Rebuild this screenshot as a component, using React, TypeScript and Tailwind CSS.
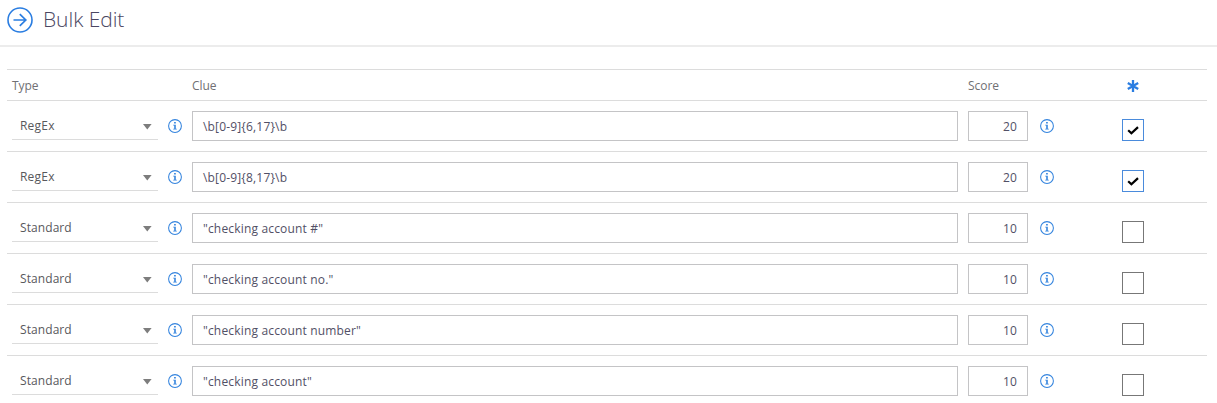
import React from "react";

type Clue = { type: string; clue: string; score: number; checked: boolean };

const clues: Clue[] = [
  { type: "RegEx", clue: "\\b[0-9]{6,17}\\b", score: 20, checked: true },
  { type: "RegEx", clue: "\\b[0-9]{8,17}\\b", score: 20, checked: true },
  { type: "Standard", clue: '"checking account #"', score: 10, checked: false },
  { type: "Standard", clue: '"checking account no."', score: 10, checked: false },
  { type: "Standard", clue: '"checking account number"', score: 10, checked: false },
  { type: "Standard", clue: '"checking account"', score: 10, checked: false },
];

function InfoIcon() {
  return (
    <svg className="mt-[18px] size-[14px] shrink-0" viewBox="0 0 14 14" fill="none">
      <circle cx="7" cy="7" r="6.4" stroke="#3484de" strokeWidth="1.05" />
      <path d="M6.1 3h1.7v1.6H6.1zM5.2 5.7h2.6v4h1v.9H5.2v-.9h1V6.6h-1z" fill="#3484de" />
    </svg>
  );
}

function ClueRow({ row }: { row: Clue }) {
  return (
    <div className="flex h-[51px] items-start border-b border-[#dcdcdc] pl-[5px]">
      <div className="flex h-[39px] w-[146px] items-start justify-between border-b border-[#dcdcdc] pl-2 pr-[6px]">
        <span
          className={
            row.type === "RegEx"
              ? "mt-4 text-[12px] leading-[18px] tracking-[0.2px] text-[#58585c]"
              : "mt-4 text-[12px] leading-[18px] tracking-[0.08px] text-[#58585c]"
          }
        >
          {row.type}
        </span>
        <svg className="mt-[23px] h-[6px] w-[9px]" viewBox="0 0 9 6">
          <path d="M0 0h8.6L4.3 5.4z" fill="#7d7d7d" />
        </svg>
      </div>
      <div className="ml-[10px] flex">
        <InfoIcon />
      </div>
      <div className="ml-[10px] mt-[10px] flex h-[30px] w-[766px] items-center border border-[#c4c4c6] pl-[10px] pt-px text-[12px] leading-[18px] tracking-[0.17px] text-[#525066]">
        {row.clue}
      </div>
      <div className="ml-[10px] mt-[10px] flex h-[30px] w-[60px] items-center justify-end border border-[#c4c4c6] pr-[10px] pt-px text-[12px] leading-[18px] tracking-[0.17px] text-[#525066]">
        {row.score}
      </div>
      <div className="ml-3 flex">
        <InfoIcon />
      </div>
      <div
        className={
          row.checked
            ? "ml-[68px] mt-[18px] flex size-[22px] items-center justify-center border border-[#4a8bdc]"
            : "ml-[68px] mt-[18px] flex size-[22px] items-center justify-center border border-[#777777]"
        }
      >
        {row.checked && (
          <svg className="size-5" viewBox="0 0 20 20" fill="none">
            <path d="M5.2 10.2l3.2 3.1 6.6-6.2" stroke="#000" strokeWidth="2.2" />
          </svg>
        )}
      </div>
    </div>
  );
}

export default function App() {
  return (
    <div className="h-[403px] w-[1217px] overflow-hidden bg-white font-['Open_Sans',sans-serif]">
      <header className="flex h-[47px] items-start border-b-2 border-[#ececec] pl-[7px]">
        <svg className="mt-[7px] size-[26px]" viewBox="0 0 26 26" fill="none" stroke="#2a7de1">
          <circle cx="13" cy="13" r="12" strokeWidth="1.6" />
          <path d="M6.5 13h12M12.8 7.2l6 5.8-6 5.8" strokeWidth="1.7" />
        </svg>
        <h1 className="ml-[10px] mt-[5px] text-[21px] font-light leading-7 tracking-[-0.05px] text-[#4a4662]">Bulk Edit</h1>
      </header>
      <main className="ml-[7px] mt-[22px] w-[1200px] border-t border-[#dcdcdc]">
        <div className="flex h-[31px] items-start border-b border-[#dcdcdc] pl-[5px] pt-[7px] text-[12px] leading-[18px] tracking-[-0.05px] text-[#707074]">
          <span className="w-[180px]">Type</span>
          <span className="w-[776px]">Clue</span>
          <span className="w-[159px]">Score</span>
          <svg className="mt-[3px] size-[12px]" viewBox="0 0 12 12" stroke="#2a7de1" strokeWidth="2.3">
            <path d="M6 0v12M.8 3l10.4 6M.8 9l10.4-6" />
          </svg>
        </div>
        {clues.map((row) => (
          <ClueRow key={row.clue} row={row} />
        ))}
      </main>
    </div>
  );
}
